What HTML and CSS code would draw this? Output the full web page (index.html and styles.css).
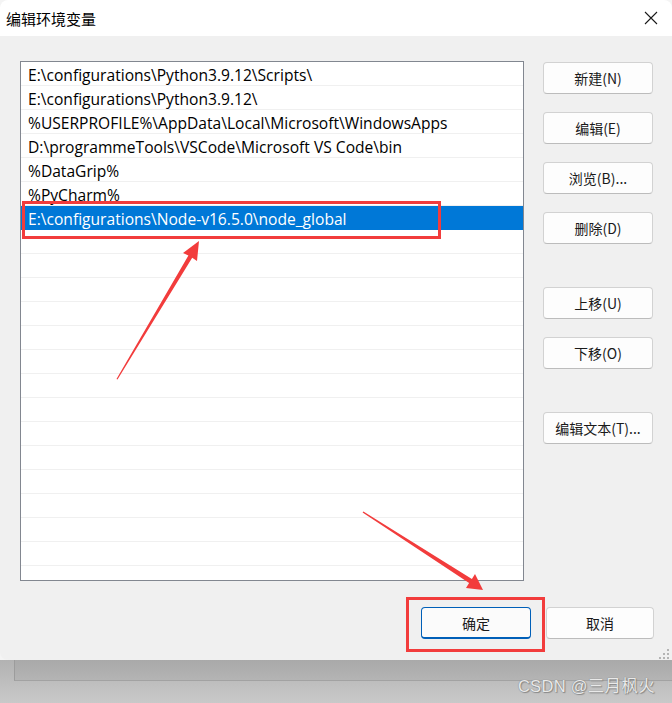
FILE: index.html
```html
<!DOCTYPE html>
<html lang="zh-CN">
<head>
    <meta charset="UTF-8">
    <meta name="viewport" content="width=device-width, initial-scale=1.0">
    <title>编辑环境变量</title>
    <link rel="stylesheet" href="styles.css">
</head>
<body>
    <div class="window">
        <div class="titlebar">
            <span class="title">编辑环境变量</span>
            <svg class="close" width="14" height="14" viewBox="0 0 14 14">
                <path d="M1 1 L13 13 M13 1 L1 13" stroke="#1a1a1a" stroke-width="1.1" fill="none"/>
            </svg>
        </div>

        <div class="dialog">
            <div class="main">
                <ul class="path-list">
                    <li>E:\configurations\Python3.9.12\Scripts\</li>
                    <li>E:\configurations\Python3.9.12\</li>
                    <li>%USERPROFILE%\AppData\Local\Microsoft\WindowsApps</li>
                    <li>D:\programmeTools\VSCode\Microsoft VS Code\bin</li>
                    <li>%DataGrip%</li>
                    <li>%PyCharm%</li>
                    <li class="selected">E:\configurations\Node-v16.5.0\node_global</li>
                    <li></li><li></li><li></li><li></li><li></li><li></li><li></li>
                    <li></li><li></li><li></li><li></li><li></li><li></li><li></li><li></li>
                </ul>

                <div class="side-buttons">
                    <button class="btn">新建(N)</button>
                    <button class="btn">编辑(E)</button>
                    <button class="btn">浏览(B)...</button>
                    <button class="btn">删除(D)</button>
                    <button class="btn btn-gap">上移(U)</button>
                    <button class="btn">下移(O)</button>
                    <button class="btn btn-gap">编辑文本(T)...</button>
                </div>
            </div>

            <div class="footer">
                <button class="btn btn-ok">确定</button>
                <button class="btn btn-cancel">取消</button>
            </div>

            <svg class="grip" width="14" height="14" viewBox="0 0 14 14">
                <rect x="10" y="2" width="2" height="2" fill="#b4b4b4"/>
                <rect x="6" y="6" width="2" height="2" fill="#b4b4b4"/>
                <rect x="10" y="6" width="2" height="2" fill="#b4b4b4"/>
                <rect x="2" y="10" width="2" height="2" fill="#b4b4b4"/>
                <rect x="6" y="10" width="2" height="2" fill="#b4b4b4"/>
                <rect x="10" y="10" width="2" height="2" fill="#b4b4b4"/>
            </svg>
        </div>
    </div>

    <div class="desktop">
        <div class="behind"></div>
        <span class="watermark">CSDN @三月枫火</span>
    </div>

    <!-- annotation marks drawn over the screenshot -->
    <div class="mark mark-row"></div>
    <div class="mark mark-ok"></div>
    <svg class="arrows" width="672" height="703" viewBox="0 0 672 703">
        <polygon points="199,241 183,253 188.4,255.6 116.5,379 117.5,379.4 192.2,257.8 197,261" fill="#f23c3c"/>
        <polygon points="483,590 466,588 469.1,583.1 362.6,512.4 363.4,511.6 471.9,578.9 475,574" fill="#f23c3c"/>
    </svg>
</body>
</html>
```

FILE: styles.css
```css
body {
    margin: 0;
    width: 672px;
    height: 703px;
    overflow: hidden;
    position: relative;
    background-color: #f4f4f4;
    font-family: "Open Sans", "Noto Sans CJK SC", sans-serif;
    color: #000000;
}

.window {
    width: 672px;
    height: 660px;
    background: #f0f0f0;
    border-radius: 8px 8px 0 8px;
    overflow: hidden;
    display: flex;
    flex-direction: column;
    position: relative;
}

.titlebar {
    height: 36px;
    background: #ffffff;
    display: flex;
    align-items: center;
    justify-content: space-between;
    padding: 0 14px 0 6px;
    flex-shrink: 0;
}

.title {
    font-family: "Noto Sans CJK SC", sans-serif;
    font-size: 15px;
    color: #000000;
}

.close {
    margin-top: -1px;
}

.dialog {
    flex: 1;
    position: relative;
    display: flex;
    flex-direction: column;
}

.main {
    display: flex;
    padding: 25px 0 0 20px;
}

.path-list {
    list-style: none;
    margin: 0;
    padding: 0;
    width: 504px;
    height: 520px;
    box-sizing: border-box;
    border: 1px solid #828790;
    background: #ffffff;
    overflow: hidden;
}

.path-list li {
    height: 24px;
    line-height: 22px;
    padding: 2px 0 0 7px;
    border-bottom: 1px solid #f0f0f0;
    font-size: 15.6px;
    white-space: nowrap;
    box-sizing: border-box;
}

.path-list li.selected {
    background: #0078d7;
    color: #ffffff;
    border-bottom-color: #0078d7;
}

.side-buttons {
    display: flex;
    flex-direction: column;
    gap: 18px;
    margin: 1px 0 0 19px;
    width: 110px;
}

.btn {
    height: 32px;
    background: #fdfdfd;
    border: 1px solid #d2d2d2;
    border-bottom-color: #bcbcbc;
    border-radius: 4px;
    font-family: "Noto Sans CJK SC", sans-serif;
    font-size: 14px;
    color: #1a1a1a;
    padding: 0;
}

.btn-gap {
    margin-top: 25px;
}

.footer {
    display: flex;
    justify-content: flex-end;
    gap: 15px;
    padding: 26px 18px 0 0;
}

.btn-ok {
    width: 110px;
    border: 1px solid #005fb8;
    border-bottom: 2px solid #005fb8;
    background: #fbfbfb;
}

.btn-cancel {
    width: 108px;
}

.grip {
    position: absolute;
    right: 1px;
    bottom: -1px;
}

.desktop {
    height: 43px;
    position: relative;
    background: linear-gradient(#b2b2b2, #c9c9c9);
    display: flex;
    justify-content: flex-end;
    align-items: center;
    padding-right: 17px;
}

.behind {
    position: absolute;
    left: 14px;
    right: 0;
    top: 0;
    height: 20px;
    border-left: 1px solid #9c9c9c;
    border-bottom: 1px solid #a2a2a2;
    background: linear-gradient(#a9a9a9, #b4b4b4);
}

.watermark {
    position: relative;
    margin-top: 7px;
    font-family: "Liberation Sans", "Noto Sans CJK SC", sans-serif;
    font-size: 16.5px;
    letter-spacing: 0.3px;
    color: #e9e9e9;
    text-shadow: 0 0 1px #6a6a6a, 1px 1px 1px #8a8a8a;
}

.mark {
    position: absolute;
    box-sizing: border-box;
    border: 3px solid #f23c3c;
}

.mark-row {
    left: 22px;
    top: 201px;
    width: 419px;
    height: 38px;
}

.mark-ok {
    left: 406px;
    top: 597px;
    width: 139px;
    height: 55px;
}

.arrows {
    position: absolute;
    left: 0;
    top: 0;
    pointer-events: none;
}
```
